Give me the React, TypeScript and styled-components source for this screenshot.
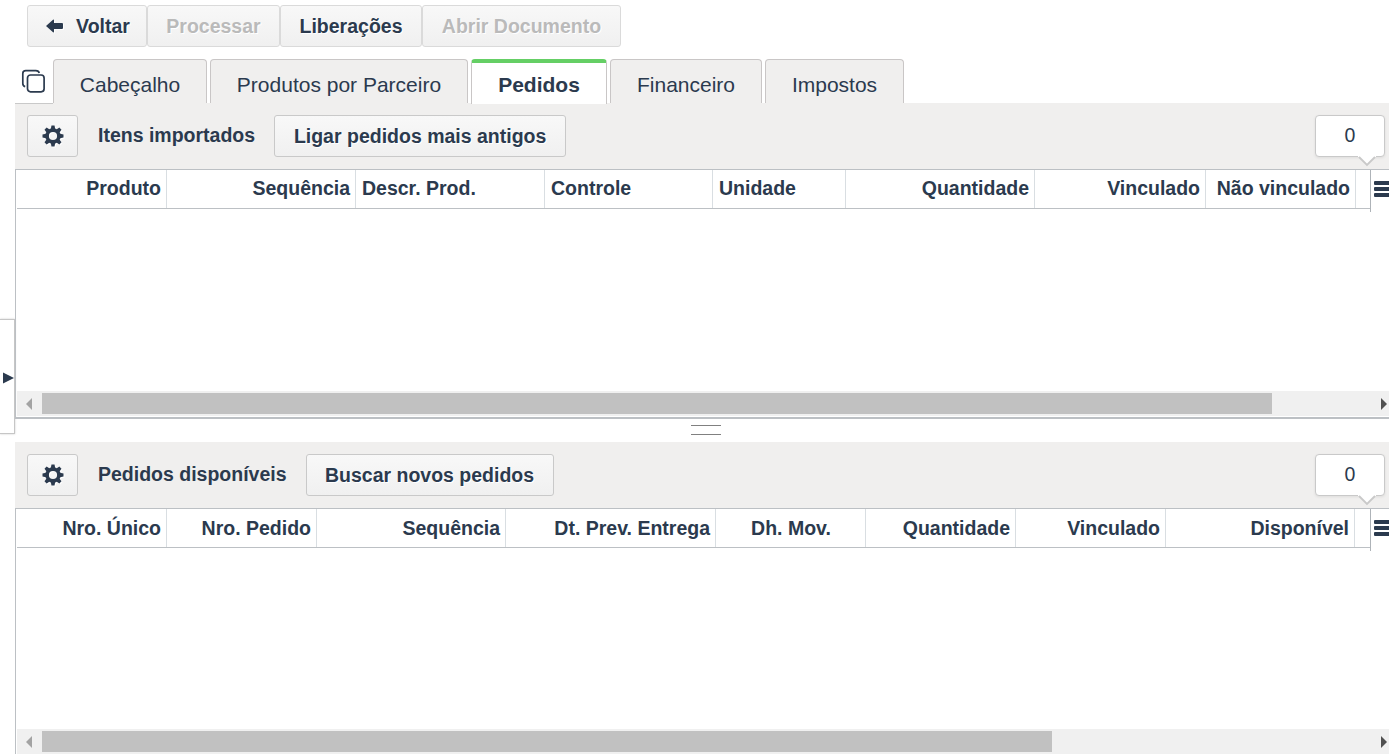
import React from 'react';
import styled, { createGlobalStyle, css } from 'styled-components';

const GlobalStyle = createGlobalStyle`
  * {
    box-sizing: border-box;
  }

  body {
    margin: 0;
    overflow: hidden;
    background-color: #fff;
    color: #2b3a4e;
    font-family: 'Liberation Sans', Arial, sans-serif;
    font-size: 19.5px;
  }
`;

const Wrapper = styled.div`
  display: flex;
  width: 100%;
  height: 100vh;
  overflow: hidden;
`;

const Rail = styled.div`
  flex: 0 0 15px;
  padding-top: 319px;
`;

const RailHandle = styled.div`
  display: flex;
  align-items: center;
  justify-content: flex-end;
  height: 115px;
  padding-top: 3px;
  border: 1px solid #c6c6c6;
  border-left: none;
  box-shadow: 0 0 2px rgba(0, 0, 0, 0.2);
`;

const Main = styled.div`
  flex: 1;
  min-width: 0;
  display: flex;
  flex-direction: column;
`;

const Toolbar = styled.div`
  display: flex;
  padding: 5px 0 0 12px;
  height: 59px;
`;

const Button = styled.button<{ $width: number; $strong?: boolean }>`
  display: flex;
  align-items: center;
  justify-content: center;
  flex: none;
  width: ${({ $width }) => $width}px;
  height: 42px;
  padding: 0;
  border: 1px solid ${({ $strong }) => ($strong ? '#c9c9c9' : '#dadada')};
  border-radius: 3px;
  background: linear-gradient(#f8f8f8, #f0f0f0);
  color: inherit;
  font: inherit;
  font-weight: bold;
  line-height: 22px;
  text-shadow: 1px 1px 0 #fff;
  white-space: nowrap;

  &:disabled {
    color: #bababa;
  }

  svg {
    filter: drop-shadow(1px 1px 0 #fff);
  }
`;

const BackIcon = styled.svg`
  margin: 0 13px 0 2px;
`;

const TabBar = styled.div`
  display: flex;
  height: 44px;
`;

const CopyBox = styled.div`
  flex: 0 0 38px;
  padding: 10px 0 0 6px;
`;

const Tabs = styled.div`
  display: flex;
  gap: 3px;
`;

const Tab = styled.div<{ $width: number; $active?: boolean }>`
  width: ${({ $width }) => $width}px;
  height: 44px;
  padding-top: 13px;
  border: 1px solid #c9c6c6;
  border-bottom: none;
  border-radius: 4px 4px 0 0;
  background-color: #f0efee;
  font-size: 21px;
  line-height: 24px;
  text-align: center;
  white-space: nowrap;

  ${({ $active }) =>
    $active &&
    css`
      height: 45px;
      padding-top: 10px;
      border-top: 4px solid #65cf65;
      background-color: #fff;
      font-weight: bold;
      z-index: 1;
    `}
`;

const PanelHeader = styled.div<{ $edge?: boolean }>`
  display: flex;
  align-items: flex-start;
  flex: 0 0 66px;
  padding: 12px 4px 0 12px;
  background: ${({ $edge }) =>
    $edge
      ? 'linear-gradient(#c9c9c9, #c9c9c9) 0 0 / 38px 1px no-repeat, #f0efee'
      : '#f0efee'};
`;

const PanelTitle = styled.div`
  margin: 0 19px 0 20px;
  font-weight: bold;
  line-height: 40px;
  white-space: nowrap;
`;

const Counter = styled.div`
  position: relative;
  width: 70px;
  height: 42px;
  margin-left: auto;
  border: 1px solid #c9c9c9;
  border-radius: 4px;
  background-color: #fff;
  box-shadow: 0 1px 3px rgba(0, 0, 0, 0.08);
  line-height: 38px;
  text-align: center;
`;

const CounterTail = styled.svg`
  position: absolute;
  left: 42px;
  top: 40px;
`;

const Grid = styled.div<{ $height: number; $closed?: boolean }>`
  display: flex;
  flex-direction: column;
  flex: 0 0 ${({ $height }) => $height}px;
  border-top: 1px solid #bcc0c4;
  border-left: 1px solid #bcc0c4;
  border-bottom: ${({ $closed }) => ($closed ? '2px solid #bcc0c4' : 'none')};
  padding-bottom: ${({ $closed }) => ($closed ? 1 : 0)}px;
`;

const HeaderRow = styled.div`
  display: flex;
  height: 42px;
  padding-left: 1px;
`;

const Columns = styled.div<{ $lineHeight: number }>`
  display: flex;
  flex: 0 0 1353px;
  height: 39px;
  border-bottom: 1px solid #bcc0c4;
  line-height: ${({ $lineHeight }) => $lineHeight}px;
`;

const Column = styled.div<{ $width: number; $align?: string }>`
  flex: 0 0 ${({ $width }) => $width}px;
  padding: 0 5px 0 6px;
  border-right: 1px solid #d9dee2;
  font-weight: bold;
  text-align: ${({ $align }) => $align || 'right'};
  white-space: nowrap;
`;

const MenuCell = styled.div<{ $top: number }>`
  flex: 1;
  height: 42px;
  padding: ${({ $top }) => $top}px 0 0 3px;
  border-left: 1px solid #aeb3b8;
  overflow: hidden;

  svg {
    display: block;
  }
`;

const Rows = styled.div`
  flex: 1;
`;

const Scrollbar = styled.div`
  display: flex;
  align-items: center;
  height: 25px;
  margin-left: 1px;
  padding-left: 8px;
  background-color: #f0f0f0;
`;

const Thumb = styled.div<{ $width: number }>`
  width: ${({ $width }) => $width}px;
  height: 21px;
  margin: 0 auto 0 9px;
  background-color: #c1c1c1;
`;

const Splitter = styled.div`
  display: flex;
  justify-content: center;
  flex: 0 0 23px;
  padding: 6px 0 0 8px;
`;

const Grip = styled.div`
  width: 30px;
  height: 10px;
  border: solid #808080;
  border-width: 1px 0;
`;

type ColumnDef = {
  label: string;
  width: number;
  align?: string;
};

const importedColumns: ColumnDef[] = [
  { label: 'Produto', width: 150 },
  { label: 'Sequência', width: 189 },
  { label: 'Descr. Prod.', width: 189, align: 'left' },
  { label: 'Controle', width: 168, align: 'left' },
  { label: 'Unidade', width: 133, align: 'left' },
  { label: 'Quantidade', width: 189 },
  { label: 'Vinculado', width: 171 },
  { label: 'Não vinculado', width: 150 },
];

const availableColumns: ColumnDef[] = [
  { label: 'Nro. Único', width: 150 },
  { label: 'Nro. Pedido', width: 150 },
  { label: 'Sequência', width: 189 },
  { label: 'Dt. Prev. Entrega', width: 210 },
  { label: 'Dh. Mov.', width: 150, align: 'center' },
  { label: 'Quantidade', width: 150 },
  { label: 'Vinculado', width: 150 },
  { label: 'Disponível', width: 189 },
];

const teeth = [0, 45, 90, 135, 180, 225, 270, 315];

function GearIcon() {
  return (
    <svg width="22" height="22" viewBox="-11 -11 22 22" fill="#2b3a4e">
      <circle r="5.9" fill="none" stroke="#2b3a4e" strokeWidth="3.6" />
      {teeth.map((angle) => (
        <path key={angle} d="M-2.2 -7 L-1.5 -10.5 H1.5 L2.2 -7 Z" transform={`rotate(${angle})`} />
      ))}
    </svg>
  );
}

type PanelProps = {
  title: string;
  action: string;
  actionWidth: number;
  columns: ColumnDef[];
  height: number;
  thumb: number;
  first?: boolean;
};

function Panel({ title, action, actionWidth, columns, height, thumb, first }: PanelProps) {
  return (
    <>
      <PanelHeader $edge={first}>
        <Button $width={51} $strong aria-label="Configurar">
          <GearIcon />
        </Button>
        <PanelTitle>{title}</PanelTitle>
        <Button $width={actionWidth} $strong>
          {action}
        </Button>
        <Counter>
          0
          <CounterTail width="18" height="11" viewBox="0 0 18 11">
            <path d="M0 0 H18 V1 H17 L9 9 L1 1 H0 Z" fill="#fff" />
            <path d="M1 1 L9 9 L17 1" fill="none" stroke="#c9c9c9" strokeWidth="1.8" />
          </CounterTail>
        </Counter>
      </PanelHeader>
      <Grid $height={height} $closed={first}>
        <HeaderRow>
          <Columns $lineHeight={first ? 37 : 39}>
            {columns.map(({ label, width, align }) => (
              <Column key={label} $width={width} $align={align}>
                {label}
              </Column>
            ))}
          </Columns>
          <MenuCell $top={11}>
            <svg width="16" height="16" viewBox="0 0 16 16" fill="#2b3a4e">
              <rect width="18" height="4" rx="1" />
              <rect y="6" width="18" height="4" rx="1" />
              <rect y="12" width="18" height="4" rx="1" />
            </svg>
          </MenuCell>
        </HeaderRow>
        <Rows />
        <Scrollbar>
          <svg width="8" height="12" viewBox="0 0 8 12">
            <path d="M7 0 V12 L1 6 Z" fill="#a3a3a3" />
          </svg>
          <Thumb $width={thumb} />
          <svg width="8" height="12" viewBox="0 0 8 12">
            <path d="M0 0 V12 L6 6 Z" fill="#505050" />
          </svg>
        </Scrollbar>
      </Grid>
    </>
  );
}

function App() {
  return (
    <Wrapper>
      <GlobalStyle />
      <Rail>
        <RailHandle>
          <svg width="11" height="12" viewBox="0 0 11 12">
            <path d="M0 0.5 L11 6 L0 11.5 Z" fill="#2b3a4e" />
          </svg>
        </RailHandle>
      </Rail>
      <Main>
        <Toolbar>
          <Button $width={120}>
            <BackIcon width="17" height="14" viewBox="0 0 17 14">
              <path
                d="M0 7 L7 0.8 Q8 0 8 1.5 V4 H16 Q17 4 17 5 V9 Q17 10 16 10 H8 V12.5 Q8 14 7 13.2 Z"
                fill="#2b3a4e"
              />
            </BackIcon>
            Voltar
          </Button>
          <Button $width={133} disabled>
            Processar
          </Button>
          <Button $width={142}>Liberações</Button>
          <Button $width={199} disabled>
            Abrir Documento
          </Button>
        </Toolbar>
        <TabBar>
          <CopyBox>
            <svg width="25" height="25" viewBox="0 0 25 25" fill="none" stroke="#2b3a4e" strokeWidth="1.7">
              <rect x="6.5" y="6" width="16.6" height="16.8" rx="3" />
              <path d="M4.2 17.6 Q1.8 17 1.8 14.5 V4.5 Q1.8 1.6 4.8 1.6 H14.8 Q17.8 1.6 18.2 4" />
            </svg>
          </CopyBox>
          <Tabs>
            <Tab $width={154}>Cabeçalho</Tab>
            <Tab $width={258}>Produtos por Parceiro</Tab>
            <Tab $width={136} $active>
              Pedidos
            </Tab>
            <Tab $width={152}>Financeiro</Tab>
            <Tab $width={139}>Impostos</Tab>
          </Tabs>
        </TabBar>
        <Panel
          title="Itens importados"
          action="Ligar pedidos mais antigos"
          actionWidth={292}
          columns={importedColumns}
          height={250}
          thumb={1230}
          first
        />
        <Splitter>
          <Grip />
        </Splitter>
        <Panel
          title="Pedidos disponíveis"
          action="Buscar novos pedidos"
          actionWidth={248}
          columns={availableColumns}
          height={246}
          thumb={1010}
        />
      </Main>
    </Wrapper>
  );
}

export default App;
